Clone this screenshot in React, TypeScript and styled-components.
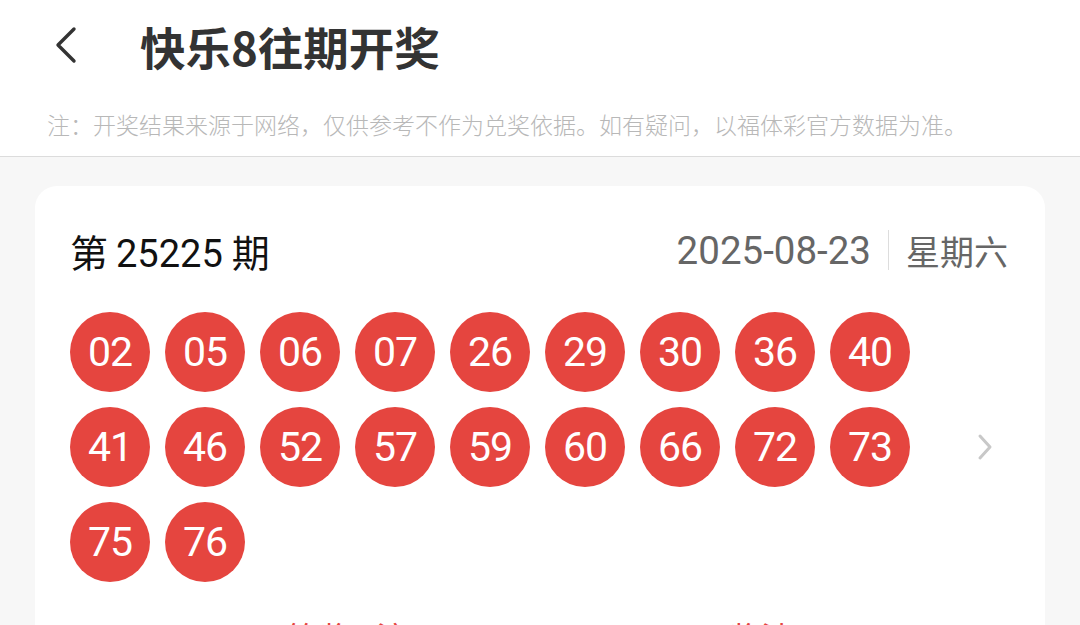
import React from 'react'
import styled, { createGlobalStyle } from 'styled-components'

const NUMBERS: string[] = [
  '02', '05', '06', '07', '26', '29', '30', '36', '40',
  '41', '46', '52', '57', '59', '60', '66', '72', '73',
  '75', '76',
]

const GlobalStyle = createGlobalStyle`
  html, body {
    margin: 0;
    padding: 0;
    background: #f7f7f7;
    font-family: Roboto, "Noto Sans CJK SC", sans-serif;
    overflow: hidden;
  }
`

export default function App(): JSX.Element {
  return (
    <PageSCP>
      <GlobalStyle />
      <TopBarSCP>
        <BackButtonSCP aria-label={'返回'}>
          <svg width={30} height={40} viewBox={'0 0 30 40'} fill={'none'}>
            <path d={'M24 3 L8 19 L24 35'} stroke={'#333'} strokeWidth={3.4} strokeLinecap={'round'} strokeLinejoin={'round'} />
          </svg>
        </BackButtonSCP>
        <TitleSCP>快乐8往期开奖</TitleSCP>
      </TopBarSCP>
      <NoticeSCP>注：开奖结果来源于网络，仅供参考不作为兑奖依据。如有疑问，以福体彩官方数据为准。</NoticeSCP>

      <ListSCP>
        <CardSCP>
          <CardHeadSCP>
            <IssueSCP>
              第<IssueNumSCP>25225</IssueNumSCP>期
            </IssueSCP>
            <DateWrapSCP>
              <DateSCP>2025-08-23</DateSCP>
              <DateDivisorSCP />
              <WeekdaySCP>星期六</WeekdaySCP>
            </DateWrapSCP>
          </CardHeadSCP>
          <BallsRowSCP>
            <BallGridSCP>
              {NUMBERS.map(n => (
                <BallSCP key={n}>{n}</BallSCP>
              ))}
            </BallGridSCP>
            <ArrowSCP>
              <svg width={16} height={28} viewBox={'0 0 16 28'} fill={'none'}>
                <path d={'M3 3 L13 14 L3 25'} stroke={'#c8c8c8'} strokeWidth={3} strokeLinecap={'round'} strokeLinejoin={'round'} />
              </svg>
            </ArrowSCP>
          </BallsRowSCP>
          <PrizeRowSCP>
            <PrizeTextSCP>一等奖 5注</PrizeTextSCP>
            <PrizeTextSCP>奖池 5,000,000元</PrizeTextSCP>
          </PrizeRowSCP>
        </CardSCP>
      </ListSCP>
    </PageSCP>
  )
}

const PageSCP = styled.div`
  width: 1080px;
  height: 625px;
  overflow: hidden;
  background: #f7f7f7;
`
const TopBarSCP = styled.div`
  display: flex;
  align-items: center;
  height: 92px;
  padding-left: 50px;
  background: #fff;
`
const BackButtonSCP = styled.div`
  display: flex;
  align-items: center;
  width: 90px;
  height: 40px;
`
const TitleSCP = styled.h1`
  margin: 0;
  font-family: "Noto Sans CJK SC", sans-serif;
  font-size: 45.5px;
  font-weight: 700;
  color: #333;
`
const NoticeSCP = styled.div`
  height: 64px;
  line-height: 64px;
  padding-left: 47px;
  background: #fff;
  border-bottom: 1.5px solid #dcdcdc;
  font-family: "Noto Sans CJK SC", sans-serif;
  font-size: 23px;
  font-weight: 300;
  color: #b8b8b8;
  white-space: nowrap;
`
const ListSCP = styled.div`
  padding: 29px 35px 0 35px;
`
const CardSCP = styled.div`
  background: #fff;
  border-radius: 22px;
  padding: 26px 35px 30px 35px;
`
const CardHeadSCP = styled.div`
  display: flex;
  justify-content: space-between;
  align-items: center;
  height: 76px;
`
const IssueSCP = styled.div`
  font-family: Roboto, "Noto Sans CJK SC", sans-serif;
  font-size: 38px;
  color: #111;
`
const IssueNumSCP = styled.span`
  margin: 0 9px 0 8px;
`
const DateWrapSCP = styled.div`
  display: flex;
  align-items: center;
  gap: 17px;
  padding-right: 2px;
`
const DateSCP = styled.span`
  font-family: Roboto, sans-serif;
  font-size: 38.5px;
  color: #666;
`
const WeekdaySCP = styled.span`
  font-family: "Noto Sans CJK SC", sans-serif;
  font-size: 34px;
  color: #666;
`
const DateDivisorSCP = styled.span`
  width: 1px;
  height: 40px;
  background: #ddd;
`
const BallsRowSCP = styled.div`
  display: flex;
  align-items: center;
  margin-top: 24px;
`
const BallGridSCP = styled.div`
  display: grid;
  grid-template-columns: repeat(9, 80px);
  gap: 15px;
`
const BallSCP = styled.div`
  width: 80px;
  height: 80px;
  border-radius: 50%;
  background: #e5453f;
  color: #fff;
  display: flex;
  align-items: center;
  justify-content: center;
  font-family: Roboto, sans-serif;
  font-size: 41px;
  font-weight: 400;
  letter-spacing: -1px;
`
const ArrowSCP = styled.div`
  display: flex;
  margin-left: 67px;
`
const PrizeRowSCP = styled.div`
  display: flex;
  justify-content: space-between;
  margin-top: 34px;
  padding: 0 36px 0 185px;
`
const PrizeTextSCP = styled.span`
  font-family: "Noto Sans CJK SC", sans-serif;
  font-size: 32px;
  line-height: 40px;
  color: #e5453f;
`
